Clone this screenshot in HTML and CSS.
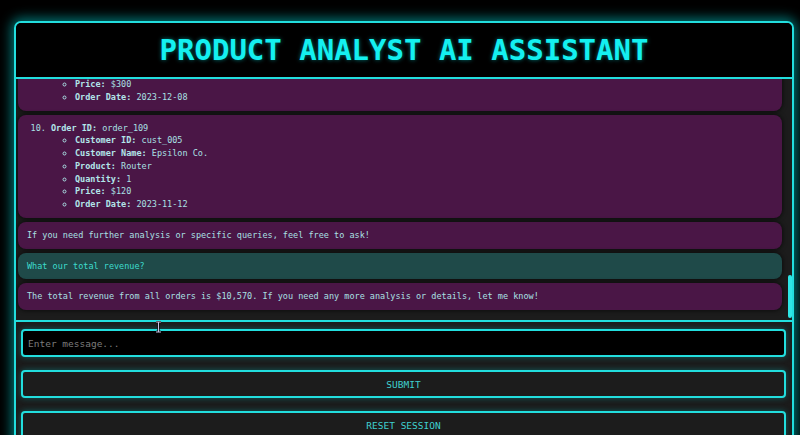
FILE: index.html
```html
<!DOCTYPE html>
<html lang="en">
<head>
<meta charset="utf-8">
<title>Product Analyst AI Assistant</title>
<link rel="stylesheet" href="styles.css">
</head>
<body>
<div class="app">
  <header class="header"><h1 class="title">PRODUCT ANALYST AI ASSISTANT</h1></header>
  <div class="chat-wrap">
    <div class="chat">
      <div class="msg bot">
        <ol class="orders" start="9">
          <li><b>Order ID:</b> order_108
            <ul class="fields">
              <li><b>Customer ID:</b> cust_004</li>
              <li><b>Customer Name:</b> Delta Ltd.</li>
              <li><b>Product:</b> Monitor</li>
              <li><b>Quantity:</b> 1</li>
              <li><b>Price:</b> $300</li>
              <li><b>Order Date:</b> 2023-12-08</li>
            </ul>
          </li>
        </ol>
      </div>
      <div class="msg bot">
        <ol class="orders" start="10">
          <li><b>Order ID:</b> order_109
            <ul class="fields">
              <li><b>Customer ID:</b> cust_005</li>
              <li><b>Customer Name:</b> Epsilon Co.</li>
              <li><b>Product:</b> Router</li>
              <li><b>Quantity:</b> 1</li>
              <li><b>Price:</b> $120</li>
              <li><b>Order Date:</b> 2023-11-12</li>
            </ul>
          </li>
        </ol>
      </div>
      <div class="msg bot">If you need further analysis or specific queries, feel free to ask!</div>
      <div class="msg user">What our total revenue?</div>
      <div class="msg bot">The total revenue from all orders is $10,570. If you need any more analysis or details, let me know!</div>
    </div>
    <div class="scroll-thumb"></div>
  </div>
  <div class="controls">
    <input class="input" type="text" placeholder="Enter message...">
    <button class="btn">SUBMIT</button>
    <button class="btn">RESET SESSION</button>
  </div>
</div>
<svg class="cursor" width="7" height="12" viewBox="0 0 7 12"><path d="M1 1h5M3.5 1v10M1 11h5" stroke="#000" stroke-width="2.4" fill="none"/><path d="M1 1h5M3.5 1v10M1 11h5" stroke="#c9c2e6" stroke-width="1.1" fill="none"/></svg>
</body>
</html>
```
FILE: styles.css
```css
html, body {
  margin: 0;
  padding: 0;
  background: #000;
  height: 435px;
  overflow: hidden;
  font-family: "DejaVu Sans Mono", "Liberation Mono", monospace;
}

.app {
  box-sizing: border-box;
  width: 780px;
  margin: 21px 0 0 14px;
  border: 2px solid #22dede;
  border-bottom: none;
  border-radius: 7px 7px 0 0;
  background: #1b1b1b;
  box-shadow: 0 0 12px 3px rgba(0, 225, 225, 0.5);
  height: 440px;
}

.header {
  height: 54px;
  background: #000;
  border-bottom: 2px solid #22dede;
  border-radius: 5px 5px 0 0;
  display: flex;
  align-items: center;
  justify-content: center;
}

.title {
  margin: 0;
  font-size: 29px;
  font-weight: bold;
  color: #14f0f0;
  letter-spacing: 0;
  text-shadow: 0 0 4px rgba(0, 255, 255, 0.45);
}

.chat-wrap {
  position: relative;
  height: 241px;
  background: #1c1c1c;
  border-bottom: 2px solid #22dede;
}

.chat {
  box-sizing: border-box;
  height: 100%;
  display: flex;
  flex-direction: column;
  justify-content: flex-end;
  gap: 4px;
  padding: 0 10px 10px 2px;
  overflow: hidden;
}

.msg {
  flex-shrink: 0;
  border-radius: 8px;
  padding: 7px 9px;
  font-size: 8.5px;
  line-height: 12.75px;
  color: #a9e0e4;
  box-shadow: 0 0 4px 1px rgba(0, 0, 0, 0.55);
}

.bot {
  background: #4a1646;
}

.user {
  background: #1f4a49;
  color: #3ddccd;
}

.orders {
  margin: 0;
  padding-left: 24px;
}

.fields {
  margin: 0;
  padding-left: 24px;
  list-style: circle;
}

.orders b {
  color: #b2e6ea;
}

.scroll-thumb {
  position: absolute;
  right: 0;
  bottom: 2px;
  width: 4px;
  height: 43px;
  border-radius: 2px;
  background: #2ee6e6;
}

.controls {
  display: flex;
  flex-direction: column;
  gap: 13px;
  padding: 7px 6px 0 5px;
}

.input,
.btn {
  box-sizing: border-box;
  height: 28px;
  border: 2px solid #22dede;
  border-radius: 4px;
  font-family: "DejaVu Sans Mono", "Liberation Mono", monospace;
  font-size: 9.5px;
  box-shadow: 0 0 6px rgba(0, 220, 220, 0.35);
}

.input {
  background: #000;
  color: #bbb;
  padding: 0 5px;
  outline: none;
}

.input::placeholder {
  color: #7c7c7c;
}

.btn {
  background: #1c1c1c;
  color: #3fd0d0;
  padding: 0;
}

.cursor {
  position: absolute;
  left: 155px;
  top: 321px;
}
```
